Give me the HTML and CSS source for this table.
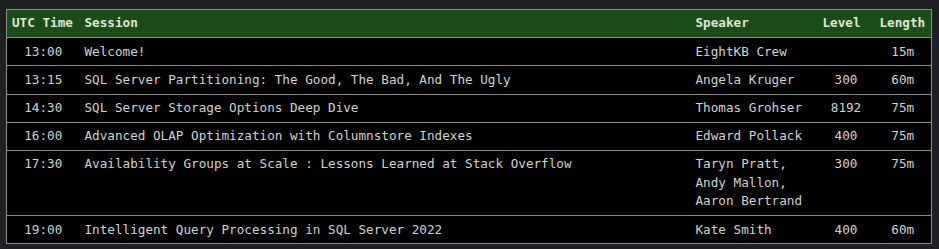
FILE: index.html
```html
<!DOCTYPE html>
<html>
<head>
<meta charset="utf-8">
<link rel="stylesheet" href="styles.css">
</head>
<body>
<table class="schedule">
  <colgroup>
    <col class="c-time"><col class="c-session"><col class="c-speaker"><col class="c-level"><col class="c-length">
  </colgroup>
  <thead>
    <tr><th>UTC Time</th><th>Session</th><th>Speaker</th><th>Level</th><th>Length</th></tr>
  </thead>
  <tbody>
    <tr><td class="ctr">13:00</td><td>Welcome!</td><td>EightKB Crew</td><td class="ctr"></td><td class="ctr">15m</td></tr>
    <tr><td class="ctr">13:15</td><td>SQL Server Partitioning: The Good, The Bad, And The Ugly</td><td>Angela Kruger</td><td class="ctr">300</td><td class="ctr">60m</td></tr>
    <tr><td class="ctr">14:30</td><td>SQL Server Storage Options Deep Dive</td><td>Thomas Grohser</td><td class="ctr">8192</td><td class="ctr">75m</td></tr>
    <tr><td class="ctr">16:00</td><td>Advanced OLAP Optimization with Columnstore Indexes</td><td>Edward Pollack</td><td class="ctr">400</td><td class="ctr">75m</td></tr>
    <tr><td class="ctr">17:30</td><td>Availability Groups at Scale : Lessons Learned at Stack Overflow</td><td>Taryn Pratt,<br>Andy Mallon,<br>Aaron Bertrand</td><td class="ctr">300</td><td class="ctr">75m</td></tr>
    <tr><td class="ctr">19:00</td><td>Intelligent Query Processing in SQL Server 2022</td><td>Kate Smith</td><td class="ctr">400</td><td class="ctr">60m</td></tr>
  </tbody>
</table>
</body>
</html>
```
FILE: styles.css
```css
html, body {
  margin: 0;
  background: #1f2023;
}
body {
  padding: 9px 8px 6px 6px;
  font-family: "DejaVu Sans Mono", monospace;
  font-size: 12.65px;
  color: #d2d2d2;
}
.schedule {
  width: 925px;
  table-layout: fixed;
  border-collapse: collapse;
  background: #000;
  border: 1px solid #8c8c8c;
}
.c-time { width: 73px; }
.c-session { width: 611px; }
.c-speaker { width: 127px; }
.c-level { width: 57px; }
.c-length { width: 57px; }
.schedule th, .schedule td {
  padding: 4.4px 5px 4.3px;
  line-height: 18.5px;
  vertical-align: top;
  white-space: nowrap;
  border-bottom: 1px solid #8c8c8c;
}
.schedule th {
  background: #1b4d18;
  color: #dfe8d8;
  font-weight: bold;
  text-align: left;
}
.schedule td.ctr { text-align: center; }
```
